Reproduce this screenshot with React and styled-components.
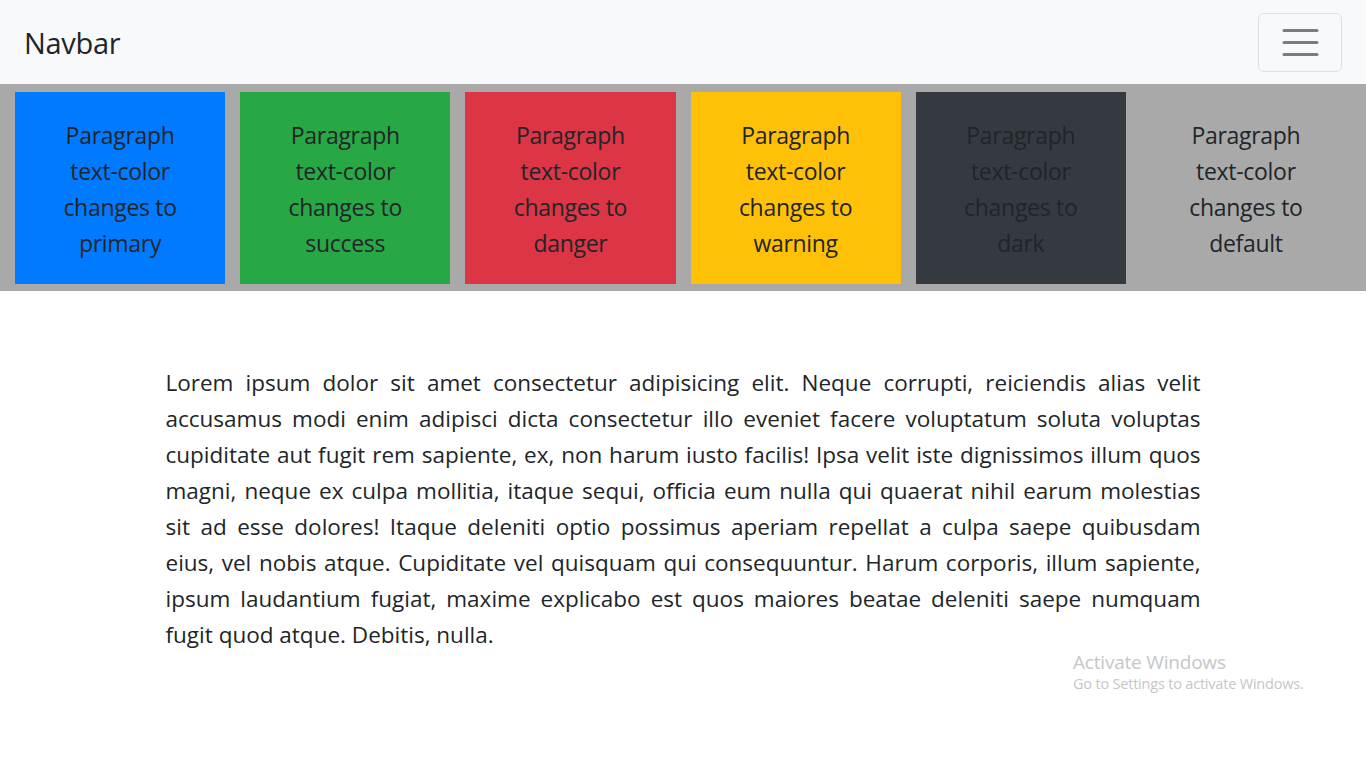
import React from 'react';
import styled, { createGlobalStyle } from 'styled-components';

const GlobalStyle = createGlobalStyle`
	html, body {
		margin: 0;
		padding: 0;
		background: #fff;
	}
	body {
		font-family: 'Open Sans', 'Noto Sans', sans-serif;
		color: #212529;
	}
`;

const Page = styled.div`
	position: relative;
	width: 1366px;
	min-height: 768px;
	overflow: hidden;
`;

const Nav = styled.nav`
	display: flex;
	align-items: center;
	justify-content: space-between;
	padding: 12px 24px 12px 24px;
	background: #f8f9fa;
`;

const Brand = styled.a`
	font-size: 29px;
	line-height: 45px;
	color: #212529;
	text-decoration: none;
	letter-spacing: -0.3px;
`;

const Toggler = styled.button`
	display: flex;
	align-items: center;
	justify-content: center;
	width: 84px;
	height: 59px;
	margin-top: 1px;
	padding: 0;
	background: transparent;
	border: 1.5px solid rgba(0, 0, 0, 0.1);
	border-radius: 6px;
`;

const Band = styled.section`
	display: flex;
	gap: 15px;
	padding: 8px 15px 7px;
	background: #a9a9a9;
`;

const Tile = styled.div`
	flex: 1;
	height: 192px;
	box-sizing: border-box;
	padding: 25px 8px 23px;
	background: ${({ bg }) => bg};
	text-align: center;
	font-size: 23px;
	line-height: 36px;
	color: #212529;
	letter-spacing: -0.3px;
`;

const TileLine = styled.span`
	display: block;
	white-space: nowrap;
`;

const Container = styled.main`
	width: 1035px;
	margin: 74px auto 0;
`;

const Para = styled.p`
	margin: 0;
	font-size: 22.5px;
	line-height: 36px;
	color: #212529;
`;

const Line = styled.span`
	display: block;
	text-align: justify;
	text-align-last: ${({ last }) => (last ? 'left' : 'justify')};
	white-space: nowrap;
`;

const Watermark = styled.div`
	position: absolute;
	left: 1073px;
	top: 651px;
	color: #c6c6c6;
	font-family: 'Open Sans', sans-serif;
	line-height: 1.2;
`;

const WmTitle = styled.div`
	font-size: 19px;
	letter-spacing: -0.2px;
`;

const WmSub = styled.div`
	font-size: 14.5px;
	margin-top: 1px;
	letter-spacing: -0.2px;
`;

const tiles = [
	{ bg: '#007bff', label: 'primary' },
	{ bg: '#28a745', label: 'success' },
	{ bg: '#dc3545', label: 'danger' },
	{ bg: '#ffc107', label: 'warning' },
	{ bg: '#343a40', label: 'dark' },
	{ bg: 'transparent', label: 'default' }
];

const lines = [
	'Lorem ipsum dolor sit amet consectetur adipisicing elit. Neque corrupti, reiciendis alias velit',
	'accusamus modi enim adipisci dicta consectetur illo eveniet facere voluptatum soluta voluptas',
	'cupiditate aut fugit rem sapiente, ex, non harum iusto facilis! Ipsa velit iste dignissimos illum quos',
	'magni, neque ex culpa mollitia, itaque sequi, officia eum nulla qui quaerat nihil earum molestias',
	'sit ad esse dolores! Itaque deleniti optio possimus aperiam repellat a culpa saepe quibusdam',
	'eius, vel nobis atque. Cupiditate vel quisquam qui consequuntur. Harum corporis, illum sapiente,',
	'ipsum laudantium fugiat, maxime explicabo est quos maiores beatae deleniti saepe numquam',
	'fugit quod atque. Debitis, nulla.'
];

const MenuIcon = () => (
	<svg width="45" height="45" viewBox="0 0 30 30">
		<path
			stroke="rgba(0, 0, 0, 0.5)"
			strokeWidth="2"
			strokeLinecap="round"
			strokeMiterlimit="10"
			d="M4 7h22M4 15h22M4 23h22"
		/>
	</svg>
);

const App = () => (
	<Page>
		<GlobalStyle />
		<Nav>
			<Brand href="#">Navbar</Brand>
			<Toggler aria-label="Toggle navigation">
				<MenuIcon />
			</Toggler>
		</Nav>
		<Band>
			{tiles.map(t => (
				<Tile key={t.label} bg={t.bg}>
					<TileLine>Paragraph</TileLine> <TileLine>text-color</TileLine>{' '}
					<TileLine>changes to</TileLine> <TileLine>{t.label}</TileLine>
				</Tile>
			))}
		</Band>
		<Container>
			<Para>
				{lines.map((l, i) => (
					<Line key={i} last={i === lines.length - 1}>
						{l}
					</Line>
				))}
			</Para>
		</Container>
		<Watermark>
			<WmTitle>Activate Windows</WmTitle>
			<WmSub>Go to Settings to activate Windows.</WmSub>
		</Watermark>
	</Page>
);

export default App;
